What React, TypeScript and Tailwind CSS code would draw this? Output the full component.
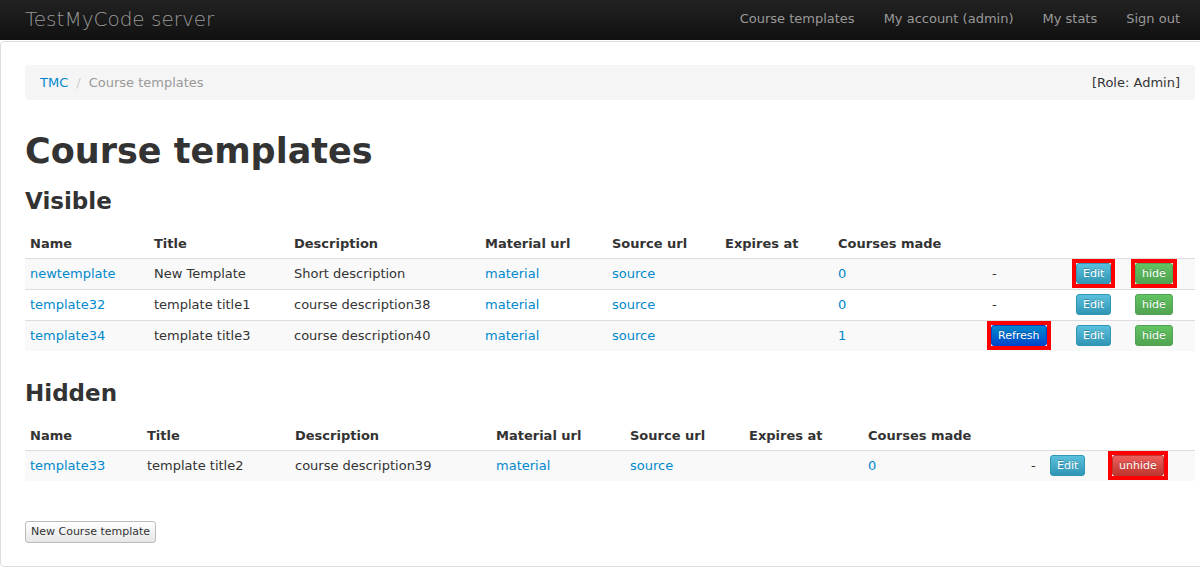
import React from 'react';

type Row = {
  name: string;
  title: string;
  description: string;
  courses: string;
  refresh?: boolean;
  marked?: boolean;
};

const visibleRows: Row[] = [
  { name: 'newtemplate', title: 'New Template', description: 'Short description', courses: '0', marked: true },
  { name: 'template32', title: 'template title1', description: 'course description38', courses: '0' },
  { name: 'template34', title: 'template title3', description: 'course description40', courses: '1', refresh: true },
];

const hiddenRows: Row[] = [
  { name: 'template33', title: 'template title2', description: 'course description39', courses: '0', marked: true },
];

const visibleCols = ['w-[124px]', 'w-[140px]', 'w-[191px]', 'w-[127px]', 'w-[113px]', 'w-[113px]', 'w-[153px]', 'w-[85px]', 'w-[59px]', 'w-[65px]'];
const hiddenCols = ['w-[117px]', 'w-[148px]', 'w-[201px]', 'w-[134px]', 'w-[119px]', 'w-[119px]', 'w-[162px]', 'w-[20px]', 'w-[62px]', 'w-[88px]'];

const headers = ['Name', 'Title', 'Description', 'Material url', 'Source url', 'Expires at', 'Courses made', '', '', ''];

function Marked({ on, children }: { on?: boolean; children: React.ReactNode }) {
  if (!on) return <>{children}</>;
  return <span className="-m-1 inline-flex border-4 border-[#ff0000]">{children}</span>;
}

function Btn({ kind, children }: { kind: 'info' | 'success' | 'primary' | 'danger'; children: React.ReactNode }) {
  const styles = {
    info: 'bg-gradient-to-b from-[#5bc0de] to-[#2f96b4] border-[#2f96b4]',
    success: 'bg-gradient-to-b from-[#62c462] to-[#51a351] border-[#51a351]',
    primary: 'bg-gradient-to-b from-[#0088cc] to-[#0044cc] border-[#0044cc]',
    danger: 'bg-gradient-to-b from-[#ee5f5b] to-[#bd362f] border-[#bd362f]',
  };
  return (
    <button className={`h-[21px] rounded-[3px] border px-[6px] text-[11px] leading-[19px] text-white [text-shadow:0_-1px_0_rgba(0,0,0,0.25)] ${styles[kind]}`}>
      {children}
    </button>
  );
}

function TemplateTable({ rows, cols, hidden }: { rows: Row[]; cols: string[]; hidden?: boolean }) {
  return (
    <table className="w-[1170px] table-fixed border-collapse text-left">
      <thead>
        <tr className="h-[29px]">
          {headers.map((h, i) => (
            <th key={i} className={`${cols[i]} px-[5px] align-middle text-[13px] font-bold`}>
              {h}
            </th>
          ))}
        </tr>
      </thead>
      <tbody>
        {rows.map((r, idx) => (
          <tr key={r.name} className={`h-[31px] border-t border-[#dddddd] ${idx % 2 === 0 ? 'bg-[#f9f9f9]' : 'bg-white'}`}>
            <td className="px-[5px]"><a className="text-[#0088cc]">{r.name}</a></td>
            <td className="px-[5px]">{r.title}</td>
            <td className="px-[5px]">{r.description}</td>
            <td className="px-[5px]"><a className="text-[#0088cc]">material</a></td>
            <td className="px-[5px]"><a className="text-[#0088cc]">source</a></td>
            <td className="px-[5px]"></td>
            <td className="px-[5px]"><a className="text-[#0088cc]">{r.courses}</a></td>
            <td className="px-[5px]">
              {r.refresh ? (
                <Marked on><Btn kind="primary">Refresh</Btn></Marked>
              ) : (
                <span className="pl-[1px]">-</span>
              )}
            </td>
            <td className="px-[5px]">
              <Marked on={r.marked && !hidden}><Btn kind="info">Edit</Btn></Marked>
            </td>
            <td className="px-[5px]">
              {hidden ? (
                <Marked on={r.marked}><Btn kind="danger">unhide</Btn></Marked>
              ) : (
                <Marked on={r.marked}><Btn kind="success">hide</Btn></Marked>
              )}
            </td>
          </tr>
        ))}
      </tbody>
    </table>
  );
}

export default function App() {
  return (
    <div className="h-[568px] w-[1200px] overflow-hidden bg-white font-['DejaVu_Sans',sans-serif] text-[13px] text-[#333333]">
      {/* Navbar */}
      <div className="flex h-[40px] items-center bg-gradient-to-b from-[#222222] to-[#111111] pb-[2px] pl-[25px] pr-[20px]">
        <div className="text-[20px] font-extralight text-[#999999]">TestMyCode server</div>
        <div className="ml-auto flex gap-[29px] text-[13px] text-[#999999]">
          <span>Course templates</span>
          <span>My account (admin)</span>
          <span>My stats</span>
          <span>Sign out</span>
        </div>
      </div>

      {/* Page body */}
      <div className="mt-[1px] mr-[-4px] h-[526px] rounded-l-[4px] border border-[#dddddd] px-[24px] pt-[23px]">
        <div className="flex h-[35px] w-[1170px] items-center rounded-[4px] bg-[#f5f5f5] px-[15px]">
          <a className="text-[#0088cc]">TMC</a>
          <span className="px-[8px] text-[#cccccc]">/</span>
          <span className="text-[#999999]">Course templates</span>
          <span className="ml-auto">[Role: Admin]</span>
        </div>

        <h1 className="mt-[28px] text-[35px] font-bold leading-[46px]">Course templates</h1>
        <h3 className="mt-[12px] text-[23px] font-bold leading-[30px]">Visible</h3>

        <div className="mt-[13px]">
          <TemplateTable rows={visibleRows} cols={visibleCols} />
        </div>

        <h3 className="mt-[27px] text-[23px] font-bold leading-[30px]">Hidden</h3>
        <div className="mt-[13px]">
          <TemplateTable rows={hiddenRows} cols={hiddenCols} hidden />
        </div>

        <button className="mt-[40px] h-[22px] rounded-[3px] border border-[#bbbbbb] bg-gradient-to-b from-white to-[#e6e6e6] px-[5px] text-[11px] text-[#333333]">
          New Course template
        </button>
      </div>
    </div>
  );
}
